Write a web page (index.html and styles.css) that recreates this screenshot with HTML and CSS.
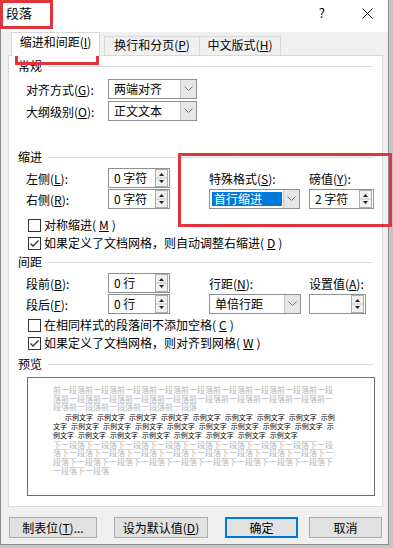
FILE: index.html
```html
<!DOCTYPE html>
<html lang="zh-CN">
<head>
  <meta charset="UTF-8" />
  <title>段落</title>
  <link rel="stylesheet" href="styles.css">
</head>
<body>
  <div class="dialog">
    <div class="titlebar">
      <span class="title">段落</span>
      <span class="help">?</span>
      <svg class="close" width="11" height="11" viewBox="0 0 11 11"><path d="M0.5 0.5 L10.5 10.5 M10.5 0.5 L0.5 10.5" stroke="#111" stroke-width="1"/></svg>
    </div>

    <div class="tabs">
      <div class="tab active">缩进和间距(<u>I</u>)</div>
      <div class="tab second">换行和分页(<u>P</u>)</div>
      <div class="tab third">中文版式(<u>H</u>)</div>
    </div>

    <div class="panel">
      <div class="heading">常规</div>
      <div class="field general">
        <span>对齐方式(<u>G</u>):</span>
        <div class="select"><span class="val">两端对齐</span><span class="drop"><svg width="9" height="6" viewBox="0 0 9 6"><path d="M0.5 0.5 L4.5 4.5 L8.5 0.5" stroke="#777" fill="none"/></svg></span></div>
        <span>大纲级别(<u>O</u>):</span>
        <div class="select"><span class="val">正文文本</span><span class="drop"><svg width="9" height="6" viewBox="0 0 9 6"><path d="M0.5 0.5 L4.5 4.5 L8.5 0.5" stroke="#777" fill="none"/></svg></span></div>
      </div>

      <div class="heading gap-lg">缩进</div>
      <div class="field pair indent">
        <span>左侧(<u>L</u>):</span>
        <div class="spin"><span class="val">0 字符</span><svg width="13" height="18" viewBox="0 0 13 18"><rect x="0.5" y="0.5" width="12" height="17" fill="#f0f0f0" stroke="#adadad"/><line x1="1" y1="9" x2="12" y2="9" stroke="#c8c8c8"/><path d="M4 7 L6.5 4 L9 7Z" fill="#222"/><path d="M4 11 L6.5 14 L9 11Z" fill="#222"/></svg></div>
        <span></span>
        <span>特殊格式(<u>S</u>):</span>
        <span></span>
        <span>磅值(<u>Y</u>):</span>

        <span>右侧(<u>R</u>):</span>
        <div class="spin"><span class="val">0 字符</span><svg width="13" height="18" viewBox="0 0 13 18"><rect x="0.5" y="0.5" width="12" height="17" fill="#f0f0f0" stroke="#adadad"/><line x1="1" y1="9" x2="12" y2="9" stroke="#c8c8c8"/><path d="M4 7 L6.5 4 L9 7Z" fill="#222"/><path d="M4 11 L6.5 14 L9 11Z" fill="#222"/></svg></div>
        <span></span>
        <div class="select focus"><span class="val"><em>首行缩进</em></span><span class="drop"><svg width="9" height="6" viewBox="0 0 9 6"><path d="M0.5 0.5 L4.5 4.5 L8.5 0.5" stroke="#777" fill="none"/></svg></span></div>
        <span></span>
        <div class="spin"><span class="val">2 字符</span><svg width="13" height="18" viewBox="0 0 13 18"><rect x="0.5" y="0.5" width="12" height="17" fill="#f0f0f0" stroke="#adadad"/><line x1="1" y1="9" x2="12" y2="9" stroke="#c8c8c8"/><path d="M4 7 L6.5 4 L9 7Z" fill="#222"/><path d="M4 11 L6.5 14 L9 11Z" fill="#222"/></svg></div>
      </div>

      <div class="checks first">
        <label class="check"><svg width="13" height="13" viewBox="0 0 13 13"><rect x="0.5" y="0.5" width="12" height="12" fill="#fff" stroke="#333"/></svg>对称缩进(<u>M</u>)</label>
        <label class="check"><svg width="13" height="13" viewBox="0 0 13 13"><rect x="0.5" y="0.5" width="12" height="12" fill="#fff" stroke="#333"/><path d="M2.5 6.5 L5 9 L10.5 3.5" fill="none" stroke="#333" stroke-width="1.3"/></svg>如果定义了文档网格，则自动调整右缩进(<u>D</u>)</label>
      </div>

      <div class="heading gap-sm">间距</div>
      <div class="field pair spacing">
        <span>段前(<u>B</u>):</span>
        <div class="spin"><span class="val">0 行</span><svg width="13" height="18" viewBox="0 0 13 18"><rect x="0.5" y="0.5" width="12" height="17" fill="#f0f0f0" stroke="#adadad"/><line x1="1" y1="9" x2="12" y2="9" stroke="#c8c8c8"/><path d="M4 7 L6.5 4 L9 7Z" fill="#222"/><path d="M4 11 L6.5 14 L9 11Z" fill="#222"/></svg></div>
        <span></span>
        <span>行距(<u>N</u>):</span>
        <span></span>
        <span>设置值(<u>A</u>):</span>

        <span>段后(<u>F</u>):</span>
        <div class="spin"><span class="val">0 行</span><svg width="13" height="18" viewBox="0 0 13 18"><rect x="0.5" y="0.5" width="12" height="17" fill="#f0f0f0" stroke="#adadad"/><line x1="1" y1="9" x2="12" y2="9" stroke="#c8c8c8"/><path d="M4 7 L6.5 4 L9 7Z" fill="#222"/><path d="M4 11 L6.5 14 L9 11Z" fill="#222"/></svg></div>
        <span></span>
        <div class="select"><span class="val">单倍行距</span><span class="drop"><svg width="9" height="6" viewBox="0 0 9 6"><path d="M0.5 0.5 L4.5 4.5 L8.5 0.5" stroke="#777" fill="none"/></svg></span></div>
        <span></span>
        <div class="spin"><span class="val"></span><svg width="13" height="18" viewBox="0 0 13 18"><rect x="0.5" y="0.5" width="12" height="17" fill="#f0f0f0" stroke="#adadad"/><line x1="1" y1="9" x2="12" y2="9" stroke="#c8c8c8"/><path d="M4 7 L6.5 4 L9 7Z" fill="#222"/><path d="M4 11 L6.5 14 L9 11Z" fill="#222"/></svg></div>
      </div>

      <div class="checks second">
        <label class="check"><svg width="13" height="13" viewBox="0 0 13 13"><rect x="0.5" y="0.5" width="12" height="12" fill="#fff" stroke="#333"/></svg>在相同样式的段落间不添加空格(<u>C</u>)</label>
        <label class="check"><svg width="13" height="13" viewBox="0 0 13 13"><rect x="0.5" y="0.5" width="12" height="12" fill="#fff" stroke="#333"/><path d="M2.5 6.5 L5 9 L10.5 3.5" fill="none" stroke="#333" stroke-width="1.3"/></svg>如果定义了文档网格，则对齐到网格(<u>W</u>)</label>
      </div>

      <div class="heading gap-md">预览</div>
      <div class="preview">
        <p class="ghost">前一段落前一段落前一段落前一段落前一段落前一段落前一段落前一段落前一段落前一段落前一段落前一段落前一段落前一段落前一段落前一段落前一段落前一段落前一段落前一段落前一段落前一段落</p>
        <p class="sample">示例文字 示例文字 示例文字 示例文字 示例文字 示例文字 示例文字 示例文字 示例文字 示例文字 示例文字 示例文字 示例文字 示例文字 示例文字 示例文字 示例文字 示例文字 示例文字 示例文字 示例文字 示例文字 示例文字 示例文字 示例文字</p>
        <p class="ghost">下一段落下一段落下一段落下一段落下一段落下一段落下一段落下一段落下一段落下一段落下一段落下一段落下一段落下一段落下一段落下一段落下一段落下一段落下一段落下一段落下一段落下一段落下一段落下一段落下一段落下一段落下一段落下一段落</p>
      </div>
    </div>

    <div class="buttons">
      <button class="btn tabstop">制表位(<u>T</u>)...</button>
      <button class="btn default">设为默认值(<u>D</u>)</button>
      <button class="btn ok">确定</button>
      <button class="btn cancel">取消</button>
    </div>
  </div>

  <!-- annotation boxes drawn over the dialog -->
  <div class="mark mark-title"></div>
  <div class="mark mark-tab"></div>
  <div class="mark mark-indent"></div>
</body>
</html>
```

FILE: styles.css
```css
html, body {
  margin: 0;
  padding: 0;
  height: 100%;
  overflow: hidden;
}

body {
  position: relative;
  background: #c6c6c6;
  font-family: "Noto Sans CJK SC", "Liberation Sans", sans-serif;
  font-size: 12px;
  color: #000;
}

u {
  text-decoration: underline;
  text-underline-offset: 1px;
}

.dialog {
  box-sizing: border-box;
  width: 389px;
  height: 545px;
  background: #f0f0f0;
  border: 1px solid #8c8c8c;
  border-top: none;
}

/* title bar */
.titlebar {
  display: flex;
  align-items: center;
  height: 32px;
  padding: 0 0 6px 5px;
  box-sizing: border-box;
  background: #fff;
}

.title {
  font-size: 13px;
  line-height: 14px;
  flex: 1;
}

.help {
  font-size: 13px;
  line-height: 14px;
  margin-right: 37px;
}

.close {
  margin-right: 15px;
}

/* tabs */
.tabs {
  display: flex;
  align-items: flex-end;
  height: 23px;
  padding-left: 10px;
}

.tab {
  box-sizing: border-box;
  height: 19px;
  line-height: 14px;
  padding-top: 1px;
  text-align: center;
  border: 1px solid #d9d9d9;
  border-bottom: none;
  background: #f0f0f0;
}

.tab.active {
  position: relative;
  z-index: 1;
  width: 89px;
  height: 24px;
  margin-bottom: -1px;
  padding-top: 2px;
  background: #fff;
}

.tab.second {
  width: 96px;
  margin-left: 4px;
}

.tab.third {
  width: 82px;
  margin-left: -1px;
}

/* tab body */
.panel {
  box-sizing: border-box;
  width: 375px;
  height: 452px;
  margin-left: 7px;
  padding: 3px 0 0 9px;
  background: #fff;
  border: 1px solid #d9d9d9;
}

.heading {
  display: flex;
  align-items: center;
  height: 14px;
  line-height: 14px;
  margin-right: 9px;
}

.heading::after {
  content: "";
  flex: 1;
  height: 1px;
  margin-left: 6px;
  background: #dcdcdc;
}

.gap-lg { margin-top: 29px; }
.gap-sm { margin-top: 3px; }
.gap-md { margin-top: 5px; }

.field {
  display: grid;
  align-items: center;
  margin-left: 8px;
}

.field.general {
  grid-template-columns: 82px 89px;
  grid-auto-rows: 20px;
  row-gap: 2px;
  margin-top: 6px;
}

.field.pair {
  grid-template-rows: 20px 20px;
  row-gap: 1px;
  margin-top: 4px;
}

.field.indent {
  grid-template-columns: 82px 62px 39px 91px 9px 65px;
}

.field.spacing {
  grid-template-columns: 82px 62px 39px 92px 8px 57px;
}

.select,
.spin {
  display: flex;
  align-items: center;
  box-sizing: border-box;
  height: 20px;
  background: #fff;
  border: 1px solid #8f8f8f;
}

.select .val,
.spin .val {
  flex: 1;
  line-height: 18px;
  padding-left: 5px;
  white-space: nowrap;
}

.select .drop {
  display: flex;
  align-items: center;
  justify-content: center;
  width: 15px;
  height: 18px;
  background: #e6e6e6;
  border-left: 1px solid #c6c6c6;
}

.select.focus .val {
  align-self: stretch;
  margin: 2px 1px 2px 2px;
  padding-left: 2px;
  line-height: 14px;
  background: #0078d7;
}

.select.focus em {
  font-style: normal;
  color: #fff;
}

.spin svg {
  margin-right: 1px;
}

.checks {
  margin-left: 10px;
}

.checks.first { margin-top: 7px; }
.checks.second { margin-top: 2px; }

.check {
  display: flex;
  align-items: center;
  gap: 3px;
  height: 18px;
  line-height: 14px;
  white-space: nowrap;
}

/* preview */
.preview {
  box-sizing: border-box;
  width: 348px;
  height: 119px;
  margin: 6px 0 0 9px;
  padding: 8px 39px 0 25px;
  background: #fff;
  border: 1px solid #6e6e6e;
  overflow: hidden;
}

.preview p {
  margin: 0;
}

.preview .ghost {
  font-size: 8px;
  line-height: 8.6px;
  color: #b8b8b8;
}

.preview .sample {
  margin: 1px 0;
  font-size: 7px;
  line-height: 9px;
  word-spacing: 2.4px;
  text-indent: 12px;
  color: #000;
}

/* bottom buttons */
.buttons {
  display: flex;
  margin-top: 10px;
  padding-left: 8px;
}

.btn {
  box-sizing: border-box;
  height: 21px;
  padding: 0;
  font-family: inherit;
  font-size: 12px;
  line-height: 14px;
  color: #000;
  background: #e1e1e1;
  border: 1px solid #adadad;
}

.btn.tabstop { width: 88px; }
.btn.default { width: 94px; margin-left: 17px; }
.btn.ok {
  width: 73px;
  margin-left: 17px;
  border-color: #0078d7;
  box-shadow: inset 0 0 0 1px #0078d7;
}
.btn.cancel { width: 73px; margin-left: 11px; }

/* red annotation frames */
.mark {
  position: absolute;
  box-sizing: border-box;
  border: 3px solid #e2343b;
  pointer-events: none;
}

.mark-title { left: 0; top: 0; width: 53px; height: 29px; }
.mark-tab { left: 15px; top: 33px; width: 84px; height: 32px; }
.mark-indent { left: 178px; top: 153px; width: 214px; height: 74px; }
```
